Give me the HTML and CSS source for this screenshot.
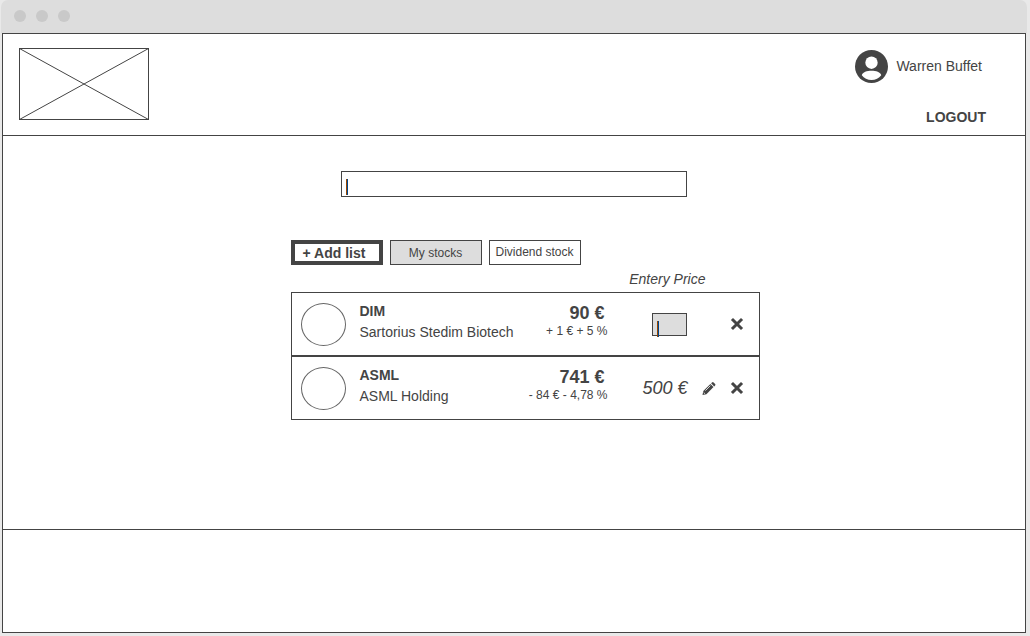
FILE: index.html
```html
<!DOCTYPE html>
<html lang="en">
<head>
<meta charset="utf-8">
<title>My stocks</title>
<link rel="stylesheet" href="styles.css">
</head>
<body class="page">
<div class="titlebar"><span class="dot"></span><span class="dot"></span><span class="dot"></span></div>
<div class="window">
  <header class="header">
    <svg class="logo" viewBox="0 0 130 72" role="img" aria-label="Logo"><rect x=".5" y=".5" width="129" height="71"/><path d="M.5.5l129 71M129.5.5L.5 71.5"/></svg>
    <div class="account">
      <a class="user" href="#">
        <svg class="user-icon" viewBox="0 0 33 33" aria-hidden="true"><circle cx="16.500" cy="16.500" r="16.500" fill="#444"/><circle cx="16.500" cy="12.700" r="6.200" fill="#fff"/><path d="M6.800 25.200C7.500 22.200 12 20.800 16.500 20.800S25.500 22.200 26.200 25.200C24 28.400 20.500 29.900 16.500 29.900S9 28.400 6.800 25.200z" fill="#fff"/></svg>
        <span>Warren Buffet</span>
      </a>
      <button class="logout" type="button">LOGOUT</button>
    </div>
  </header>
  <main class="main">
    <div class="field search"><input class="search-input" type="text" aria-label="Search stocks"><span class="caret"></span></div>
    <section class="stocks">
      <div class="tabs">
        <button class="tab tab-add" type="button">+ Add list</button>
        <button class="tab tab-active" type="button">My stocks</button>
        <button class="tab" type="button">Dividend stock</button>
      </div>
      <label class="entry-label" for="entry-dim">Entery Price</label>
      <ul class="list">
        <li class="row">
          <span class="avatar"></span>
          <div class="name"><strong class="ticker">DIM</strong><span>Sartorius Stedim Biotech</span></div>
          <div class="quote"><strong class="price">90 €</strong><span>+ 1 € + 5 %</span></div>
          <div class="entry field"><input class="entry-input" id="entry-dim" type="text"><span class="caret"></span></div>
          <button class="icon-button remove" type="button" aria-label="Remove DIM"><svg viewBox="0 0 16 16"><path class="cross" d="M4 4l8 8M12 4l-8 8"/></svg></button>
        </li>
        <li class="row">
          <span class="avatar"></span>
          <div class="name"><strong class="ticker">ASML</strong><span>ASML Holding</span></div>
          <div class="quote"><strong class="price">741 €</strong><span>- 84 € - 4,78 %</span></div>
          <div class="entry">500 €</div>
          <button class="icon-button edit" type="button" aria-label="Edit entry price"><svg viewBox="0 0 16 16"><path fill="#444" d="M1.500 15l.8-3.900 7.100-7.100 3.100 3.100-7.100 7.100z"/><path fill="#444" d="M10.100 3.300l.9-.9q.8-.7 1.600 0l1.500 1.500q.8.8 0 1.600l-.9.9z"/><path d="M4.400 10.600l5-5M2.700 12.500l1.300 1.300" stroke="#fff" stroke-width=".8"/></svg></button>
          <button class="icon-button remove" type="button" aria-label="Remove ASML"><svg viewBox="0 0 16 16"><path class="cross" d="M4 4l8 8M12 4l-8 8"/></svg></button>
        </li>
      </ul>
    </section>
  </main>
  <footer class="footer"></footer>
</div>
</body>
</html>
```
FILE: styles.css
```css
* { box-sizing: border-box; }
.page {
  margin: 0;
  min-height: 100vh;
  padding: 0 4px 3px 2px;
  display: flex;
  flex-direction: column;
  background: #e9e9e9;
  color: #444;
  font: 14px/21px "Liberation Sans", Arial, sans-serif;
}
button, input { font: inherit; color: inherit; margin: 0; }
.titlebar {
  height: 33px;
  margin: 0 -1px;
  padding: 10px 13px;
  display: flex;
  gap: 10px;
  background: #ddd;
  border-radius: 7px 7px 0 0;
}
.dot { width: 12px; height: 12px; border-radius: 50%; background: #c9c9c9; }
.window {
  flex: 1;
  display: flex;
  flex-direction: column;
  border: 1px solid #444;
  background: #fff;
}
.header {
  display: flex;
  justify-content: space-between;
  align-items: flex-start;
  padding: 14px 39px 7px 16px;
  border-bottom: 1px solid #444;
}
.logo { width: 130px; height: 72px; fill: none; stroke: #444; }
.account { display: flex; flex-direction: column; align-items: flex-end; gap: 24px; padding-top: 2px; }
.user { display: flex; align-items: center; gap: 8px; color: inherit; text-decoration: none; padding-right: 4px; }
.user-icon { width: 33px; height: 33px; }
.logout { padding: 0; border: 0; background: none; font-weight: bold; }
.main { flex: 1; display: flex; flex-direction: column; align-items: center; padding: 35px 16px; }
.field { position: relative; display: flex; }
.search { width: 346px; max-width: 100%; }
.search-input { width: 100%; height: 26px; padding: 0 8px; border: 1px solid #444; background: #fff; }
.caret {
  position: absolute;
  left: 5px;
  top: 8px;
  width: 2px;
  height: 16px;
  background: linear-gradient(to right, #984700 50%, #00458c 50%);
}
.stocks { width: 469px; margin: 43px 0 0 22px; display: flex; flex-direction: column; }
.tabs { display: flex; gap: 7px; }
.tab {
  width: 92px;
  height: 25px;
  padding: 0;
  border: 1px solid #444;
  background: #fff;
  font-size: 12px;
  line-height: 21px;
  white-space: nowrap;
}
.tab-add { border-width: 4px; font-size: 14px; font-weight: bold; line-height: 17px; padding: 1px 5px 0 0; }
.tab-active { background: #ddd; padding-top: 2px; }
.entry-label { align-self: flex-end; margin: 4px 54px 2px 0; font-style: italic; }
.list { margin: 0; padding: 0; list-style: none; }
.row {
  display: grid;
  grid-template-columns: 58px 1fr 88px 81px 40px 16px;
  align-items: center;
  height: 64px;
  padding: 0 14px 0 9px;
  border: 1px solid #444;
}
.avatar { width: 45px; height: 43px; border: 1px solid #666; border-radius: 50%; }
.name, .quote { display: flex; flex-direction: column; white-space: nowrap; padding-bottom: 4px; }
.name { padding-left: 1px; }
.quote { align-items: flex-end; font-size: 12px; line-height: 16px; padding-bottom: 6px; }
.price { font-size: 18px; line-height: 20px; padding-right: 3px; }
.entry { margin-left: 35px; font-size: 18px; font-style: italic; white-space: nowrap; }
.entry.field { margin-left: 44px; justify-self: start; }
.entry-input { width: 35px; height: 23px; padding: 0 8px; border: 1px solid #444; background: #ddd; font-size: 14px; }
.icon-button { width: 16px; height: 16px; padding: 0; border: 0; background: none; display: flex; }
.icon-button svg { width: 16px; height: 16px; }
.edit { grid-column: 5; justify-self: center; }
.remove { grid-column: 6; }
.cross { fill: none; stroke: #444; stroke-width: 3px; stroke-linecap: square; }
.footer { height: 103px; border-top: 1px solid #444; }
```
